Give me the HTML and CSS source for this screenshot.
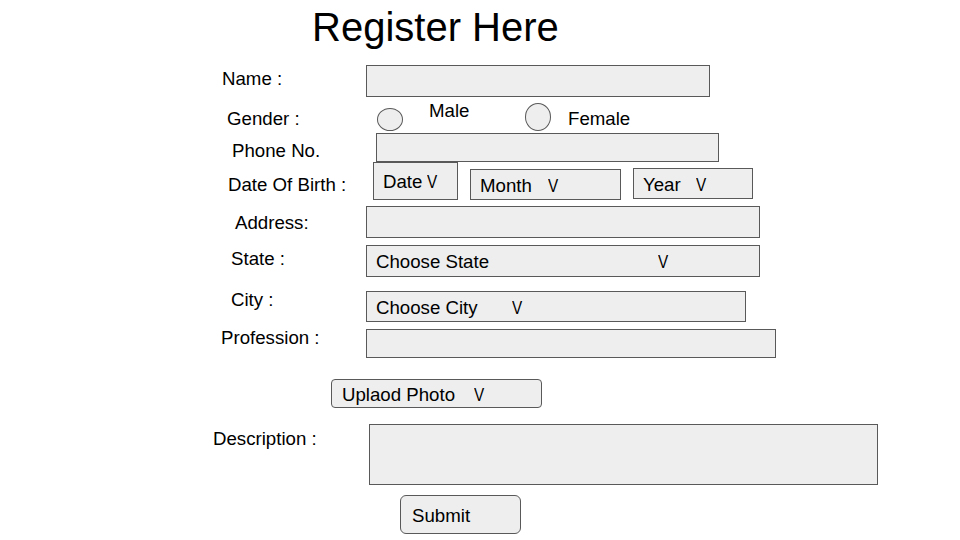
FILE: index.html
```html
<!DOCTYPE html>
<html lang="en">
<head>
<meta charset="utf-8">
<title>Register Here</title>
<link rel="stylesheet" href="styles.css">
</head>
<body>
<main class="page">
  <h1 class="title">Register Here</h1>
  <form class="form">
    <div class="row row-name">
      <label class="label lbl-name">Name :</label>
      <div class="box in-name"></div>
    </div>
    <div class="row row-gender">
      <span class="label lbl-gender">Gender :</span>
      <span class="radio radio-male"></span>
      <span class="opt opt-male">Male</span>
      <span class="radio radio-female"></span>
      <span class="opt opt-female">Female</span>
    </div>
    <div class="row row-phone">
      <label class="label lbl-phone">Phone No.</label>
      <div class="box in-phone"></div>
    </div>
    <div class="row row-dob">
      <label class="label lbl-dob">Date Of Birth :</label>
      <div class="box sel sel-date">Date<span class="chev chev-date">V</span></div>
      <div class="box sel sel-month">Month<span class="chev chev-month">V</span></div>
      <div class="box sel sel-year">Year<span class="chev chev-year">V</span></div>
    </div>
    <div class="row row-address">
      <label class="label lbl-address">Address:</label>
      <div class="box in-address"></div>
    </div>
    <div class="row row-state">
      <label class="label lbl-state">State :</label>
      <div class="box sel sel-state">Choose State<span class="chev chev-state">V</span></div>
    </div>
    <div class="row row-city">
      <label class="label lbl-city">City :</label>
      <div class="box sel sel-city">Choose City<span class="chev chev-city">V</span></div>
    </div>
    <div class="row row-prof">
      <label class="label lbl-prof">Profession :</label>
      <div class="box in-prof"></div>
    </div>
    <div class="row row-upload">
      <div class="box btn btn-upload">Uplaod Photo<span class="chev chev-upload">V</span></div>
    </div>
    <div class="row row-desc">
      <label class="label lbl-desc">Description :</label>
      <div class="box in-desc"></div>
    </div>
    <div class="row row-submit">
      <div class="box btn btn-submit">Submit</div>
    </div>
  </form>
</main>
</body>
</html>
```

FILE: styles.css
```css
* { box-sizing: border-box; }
html, body { margin: 0; padding: 0; background: #fff; }
body {
  font-family: "Liberation Sans", Arial, sans-serif;
  color: #000;
  font-size: 18.67px;
  line-height: 22px;
}
.page { width: 960px; height: 540px; overflow: hidden; }

.title {
  margin: 3px 0 0 0;
  padding-left: 312px;
  font-size: 40px;
  line-height: 48px;
  font-weight: normal;
  height: 48px;
}

.form { display: flex; flex-direction: column; }
.row { display: flex; align-items: flex-start; }

.label { flex: 0 0 auto; display: block; white-space: nowrap; }

.box {
  flex: 0 0 auto;
  background: #eeeeee;
  border: 1px solid #595959;
  white-space: nowrap;
}
.sel { padding: 4.5px 0 0 9px; }
.chev { display: inline-block; transform: scaleX(0.82); transform-origin: left center; }

/* Name */
.row-name { margin-top: 14px; }
.lbl-name { margin: 2.5px 0 0 222px; width: 144px; }
.in-name { width: 344px; height: 32px; }

/* Gender */
.row-gender { margin-top: 6px; height: 29px; }
.lbl-gender { margin: 4.5px 0 0 227px; width: 150px; }
.radio { flex: 0 0 auto; display: block; background: #eeeeee; border: 1px solid #595959; border-radius: 50%; }
.radio-male { width: 26px; height: 23px; margin-top: 5px; }
.opt { flex: 0 0 auto; display: block; }
.opt-male { margin: -3.5px 0 0 26px; width: 40px; }
.radio-female { width: 26px; height: 28px; margin-left: 56px; }
.opt-female { margin: 4.5px 0 0 17px; }

/* Phone */
.row-phone { margin-top: 1px; }
.lbl-phone { margin: 6.5px 0 0 232px; width: 144px; }
.in-phone { width: 343px; height: 29px; }

/* Date of birth */
.row-dob { margin-top: 0; }
.lbl-dob { margin: 11.5px 0 0 228px; width: 145px; }
.sel-date { width: 85px; height: 38px; padding-top: 7.5px; }
.sel-month { width: 151px; height: 31px; margin: 7px 0 0 12px; }
.sel-year { width: 120px; height: 31px; margin: 6px 0 0 12px; }
.chev-date { margin-left: 5px; }
.chev-month { margin-left: 16px; }
.chev-year { margin-left: 15px; }

/* Address */
.row-address { margin-top: 6px; }
.lbl-address { margin: 5.5px 0 0 235px; width: 131px; }
.in-address { width: 394px; height: 32px; }

/* State */
.row-state { margin-top: 7px; }
.lbl-state { margin: 2.5px 0 0 231px; width: 135px; }
.sel-state { width: 394px; height: 32px; }
.chev-state { margin-left: 169px; }

/* City */
.row-city { margin-top: 11px; }
.lbl-city { margin: 0.5px 0 0 231px; width: 135px; }
.sel-city { width: 380px; height: 31px; margin-top: 3px; }
.chev-city { margin-left: 34px; }

/* Profession */
.row-prof { margin-top: 4px; }
.lbl-prof { margin: 0.5px 0 0 221px; width: 145px; }
.in-prof { width: 410px; height: 29px; margin-top: 3px; }

/* Upload */
.row-upload { margin-top: 21px; }
.btn { border-radius: 4px; }
.btn-upload { margin-left: 331px; width: 211px; height: 29px; padding: 3.5px 0 0 10px; }
.chev-upload { margin-left: 19px; }

/* Description */
.row-desc { margin-top: 16px; }
.lbl-desc { margin: 3.5px 0 0 213px; width: 156px; }
.in-desc { width: 509px; height: 61px; }

/* Submit */
.row-submit { margin-top: 10px; }
.btn-submit { margin-left: 400px; width: 121px; height: 39px; border-radius: 6px; padding: 8.5px 0 0 11px; }
```
